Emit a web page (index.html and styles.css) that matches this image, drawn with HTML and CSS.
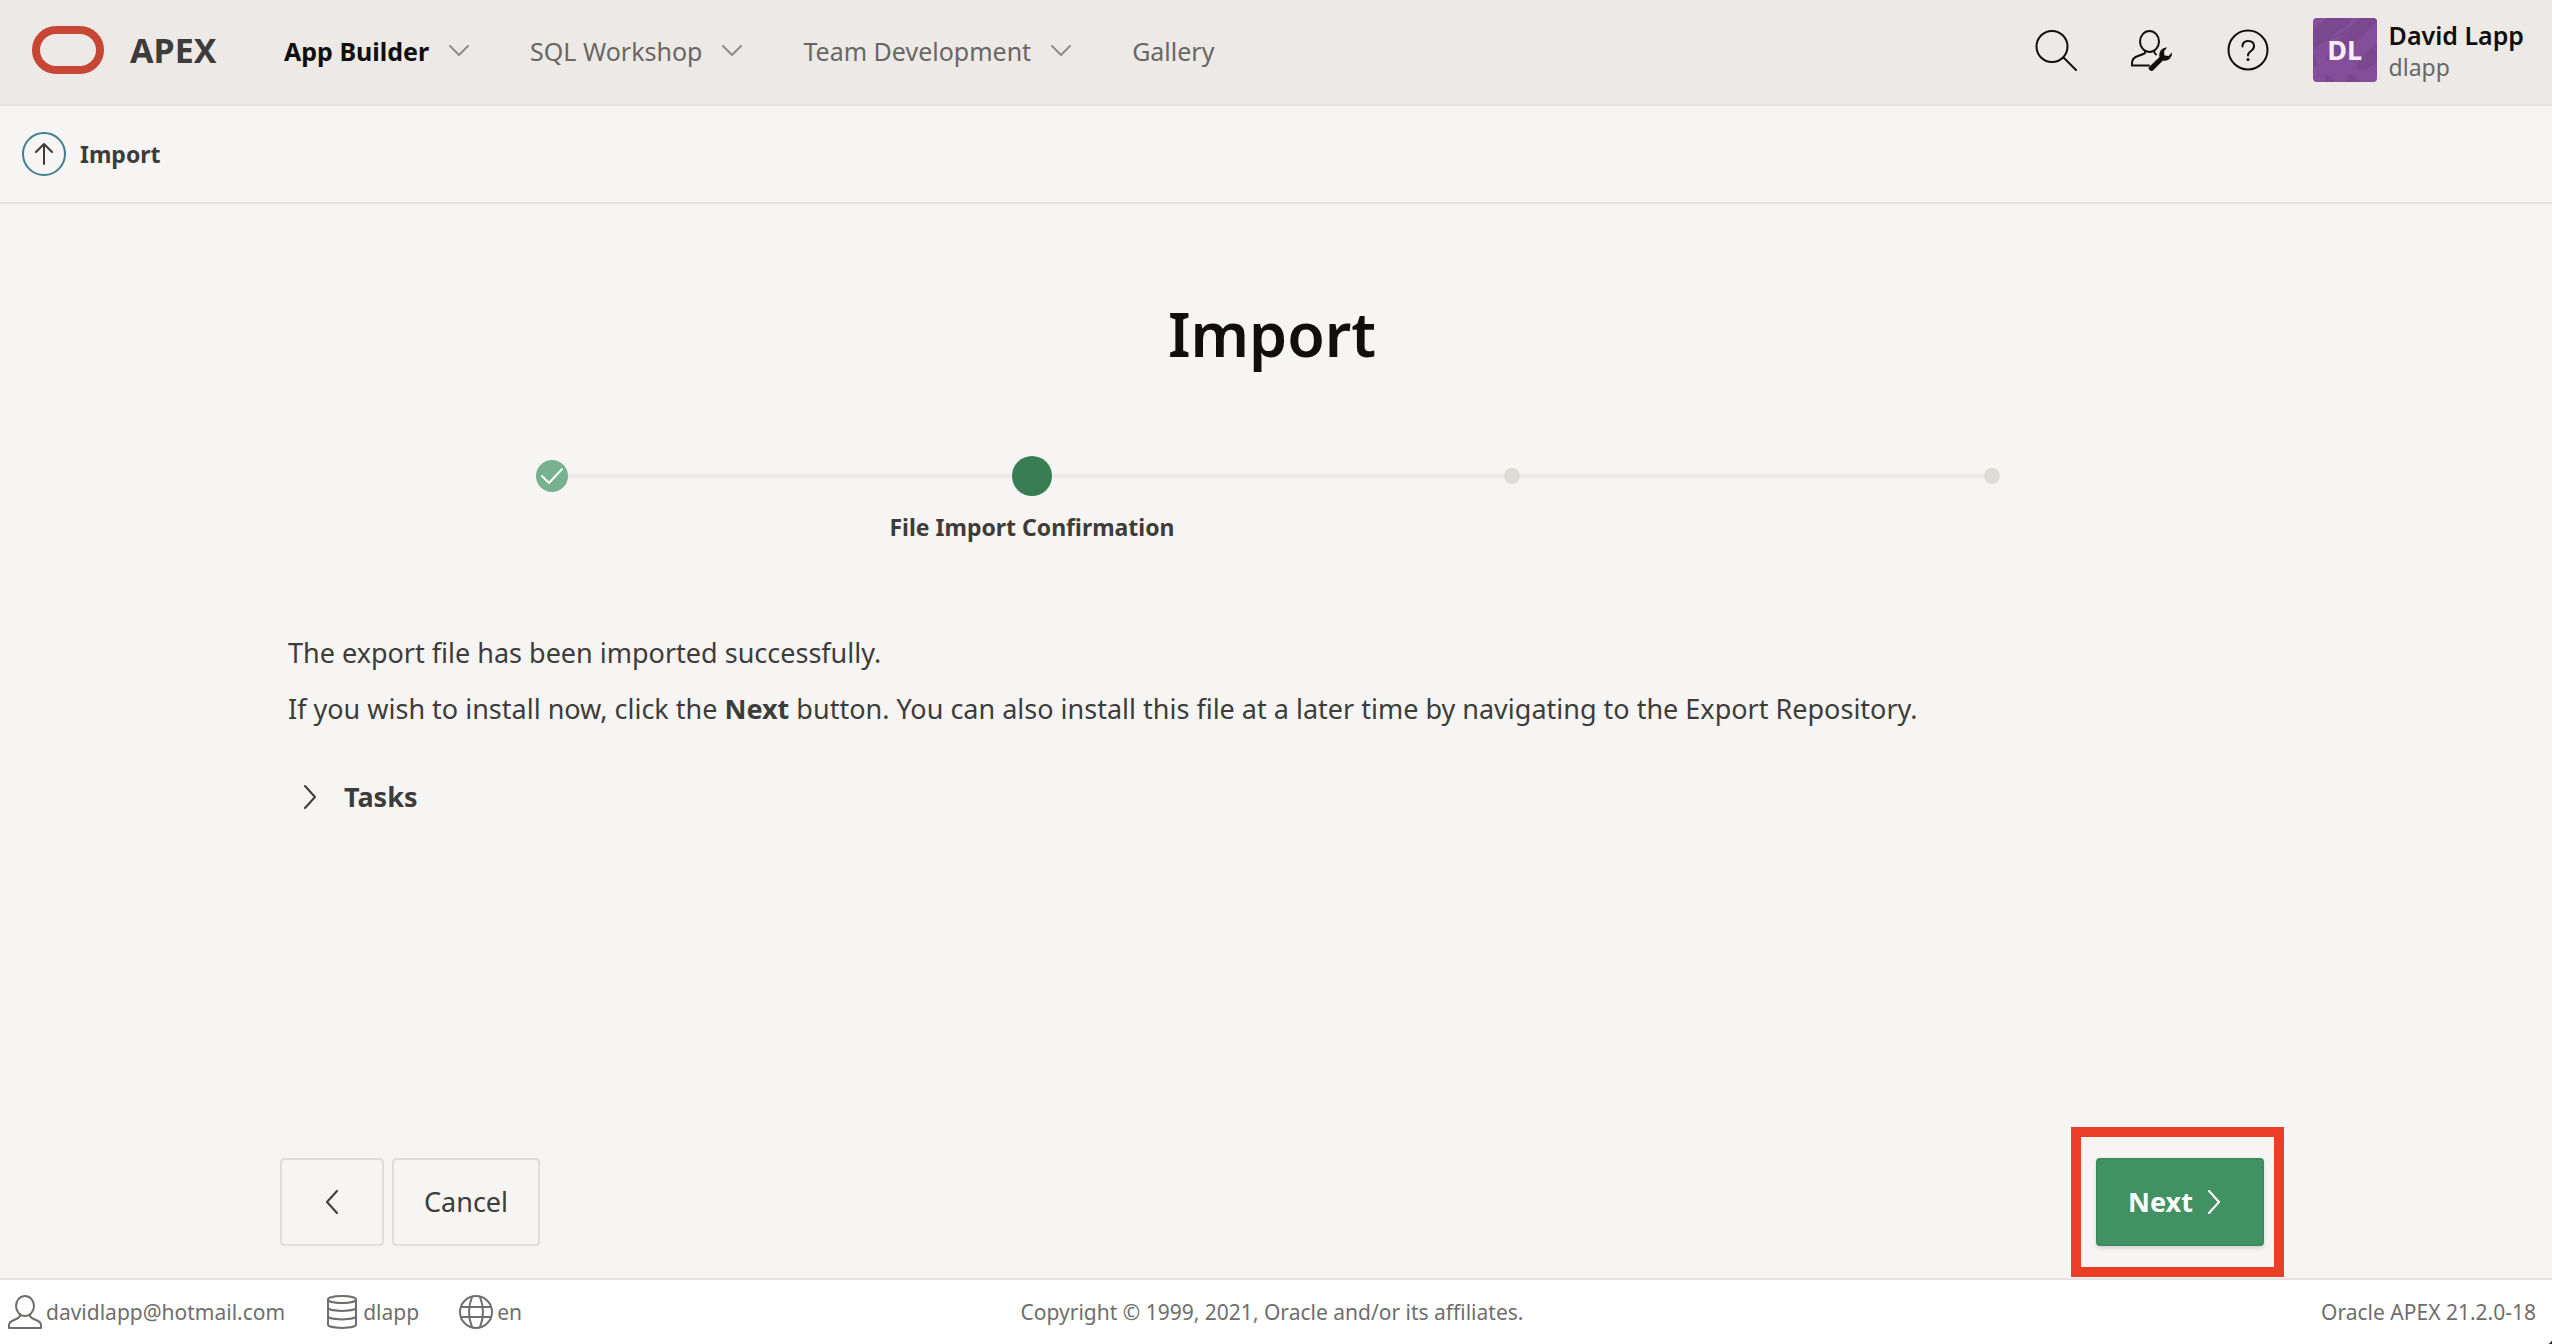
FILE: index.html
```html
<!DOCTYPE html>
<html lang="en">
<head>
<meta charset="utf-8">
<title>Import</title>
<link rel="stylesheet" href="styles.css">
</head>
<body>
<header class="header">
  <a class="brand" href="#">
    <svg class="logo" viewBox="0 0 72 48" aria-hidden="true"><rect x="4" y="4" width="64" height="40" rx="20"/></svg>
    <span class="brand-name">APEX</span>
  </a>
  <nav class="nav">
    <a class="nav-link current" href="#">App Builder<svg class="caret" viewBox="0 0 20 12" aria-hidden="true"><path d="M1 1l9 9 9-9"/></svg></a>
    <a class="nav-link" href="#">SQL Workshop<svg class="caret" viewBox="0 0 20 12" aria-hidden="true"><path d="M1 1l9 9 9-9"/></svg></a>
    <a class="nav-link" href="#">Team Development<svg class="caret" viewBox="0 0 20 12" aria-hidden="true"><path d="M1 1l9 9 9-9"/></svg></a>
    <a class="nav-link" href="#">Gallery</a>
  </nav>
  <div class="tools">
    <button class="tool" type="button" aria-label="Search"><svg viewBox="0 0 42 42"><circle cx="17" cy="17.500" r="15.500"/><path d="M28.500 28.500L41 41"/></svg></button>
    <button class="tool" type="button" aria-label="Administration"><svg viewBox="0 0 42 42"><ellipse cx="18.500" cy="12.500" rx="9.500" ry="10.500"/><path d="M14 22v2q-1 1-7 3-6 2-6 7v2.500h17M23 22q0 2 2 3.500"/><path class="solid" d="M18 38L28.500 28q-1-4 1.500-7 2.500-3 6-2.500L33 22.500l.5 4 4 .5 3.500-3.500q.5 4-2.500 6.500-3 2.500-6.500 1.500L22 41.500q-1.500 1-3.500-.5-1.500-1.500-.5-3z"/></svg></button>
    <button class="tool" type="button" aria-label="Help"><svg viewBox="0 0 42 42"><circle cx="21" cy="21" r="19.500"/><path d="M15.500 17.500q0-5.500 5.500-5.500 6 0 6 5 0 3-3 5t-3 4.500"/><circle class="solid" cx="21" cy="30.500" r="1.500"/></svg></button>
  </div>
  <a class="account" href="#">
    <span class="avatar">
      <svg class="avatar-art" viewBox="0 0 64 64" aria-hidden="true"><path d="M14 0h50v4Q48 18 36 32L20 42q-8 4-7-3Q22 24 34 16 18 18 0 32V12z"/><path d="M34 8Q24 12 18 20q10-4 17-9Q42 5 46 0h-6z" class="light"/><path d="M64 26Q54 32 47 42q-6 6-2 10 4 2 12-3l7-5zM12 64q-1-10 2-7 5 2 8 7zM32 64q3-11 8-7l8 7zM0 36q6 6 3 12H0z"/></svg>
      <span class="initials">DL</span>
    </span>
    <span class="who"><strong class="who-name">David Lapp</strong><span class="who-id">dlapp</span></span>
  </a>
</header>
<div class="crumbs">
  <button class="up" type="button" aria-label="Up"><svg viewBox="0 0 20 22"><path d="M10 21V2M2 9l8-8 8 8"/></svg></button>
  <h2 class="crumb">Import</h2>
</div>
<main class="main">
  <h1 class="title">Import</h1>
  <ol class="steps">
    <li class="step done"><span class="dot"><svg viewBox="0 0 24 18"><path d="M2 9l7 7L22 2"/></svg></span></li>
    <li class="step active"><span class="dot"></span><span class="step-label">File Import Confirmation</span></li>
    <li class="step"><span class="dot"></span></li>
    <li class="step"><span class="dot"></span></li>
  </ol>
  <div class="message">
    <p>The export file has been imported successfully.</p>
    <p>If you wish to install now, click the <b>Next</b> button. You can also install this file at a later time by navigating to the Export Repository.</p>
  </div>
  <button class="tasks" type="button" aria-expanded="false"><svg class="angle" viewBox="0 0 14 24"><path d="M2 1l10 11L2 23"/></svg>Tasks</button>
  <div class="actions">
    <button class="btn back" type="button" aria-label="Previous"><svg class="angle" viewBox="0 0 14 24"><path d="M12 1L2 12l10 11"/></svg></button>
    <button class="btn" type="button">Cancel</button>
    <div class="next-wrap"><button class="btn next" type="button">Next<svg class="angle" viewBox="0 0 14 24"><path d="M2 1l10 11L2 23"/></svg></button></div>
  </div>
</main>
<footer class="footer">
  <ul class="session">
    <li class="fact email"><svg viewBox="0 0 34 34"><ellipse cx="17" cy="11" rx="9" ry="10"/><path d="M12 19v2q-1 2-6 4-5 2-5 5v3h32v-3q0-3-5-5-5-2-6-4v-2"/></svg>davidlapp@hotmail.com</li>
    <li class="fact db"><svg viewBox="0 0 34 34"><ellipse cx="17" cy="4.500" rx="14" ry="3.500"/><path d="M3 4.500v25c0 4.500 28 4.500 28 0v-25M3 12.500c0 4.500 28 4.500 28 0M3 21c0 4.500 28 4.500 28 0"/></svg>dlapp</li>
    <li class="fact"><svg viewBox="0 0 34 34"><circle cx="17" cy="17" r="16"/><path d="M13 2q-6 15 0 30M21 2q6 15 0 30M3 12h28M3 22h28"/></svg>en</li>
  </ul>
  <span class="copyright">Copyright © 1999, 2021, Oracle and/or its affiliates.</span>
  <span class="version">Oracle APEX 21.2.0-18</span>
</footer>
</body>
</html>
```
FILE: styles.css
```css
* {
  box-sizing: border-box;
}

body {
  display: flex;
  flex-direction: column;
  min-height: 100vh;
  margin: 0;
  background: #f6f5f3;
  color: #3d3c3a;
  font: 27px/40px "Noto Sans", sans-serif;
}

a {
  color: inherit;
  text-decoration: none;
}

button {
  margin: 0;
  padding: 0;
  border: 0;
  background: none;
  color: inherit;
  font: inherit;
}

h1, h2, p, ol, ul {
  margin: 0;
  padding: 0;
  list-style: none;
}

svg {
  display: block;
  flex: none;
  fill: none;
  stroke: currentColor;
  stroke-width: 2;
  stroke-linecap: round;
  stroke-linejoin: round;
}

.solid {
  fill: currentColor;
  stroke: none;
}

.header {
  display: flex;
  align-items: center;
  height: 106px;
  padding: 0 28px 4px 32px;
  border-bottom: 2px solid #e6e2df;
  background: #ede9e6;
}

.brand {
  display: flex;
  align-items: center;
  gap: 26px;
  width: 252px;
}

.logo {
  width: 72px;
  height: 48px;
  color: #c74634;
  stroke-width: 8;
}

.brand-name {
  font-size: 34px;
  font-weight: 700;
}

.nav {
  display: flex;
  flex: 1;
  gap: 61px;
  padding-top: 2px;
}

.nav-link {
  display: flex;
  align-items: center;
  gap: 20px;
  color: #696764;
  font-size: 25px;
}

.nav-link.current {
  color: #100f0e;
  font-weight: 700;
}

.caret {
  width: 20px;
  height: 12px;
  color: #8f8c89;
}

.tools {
  display: flex;
  gap: 54px;
  margin-right: 44px;
  color: #100f0e;
}

.tool svg {
  width: 42px;
  height: 42px;
}

.account {
  display: flex;
  align-items: center;
  gap: 12px;
}

.avatar {
  display: grid;
  place-items: center;
  width: 64px;
  height: 64px;
  overflow: hidden;
  border-radius: 4px;
  background: #854e9b;
  color: #f6eef9;
  font-size: 27px;
  font-weight: 700;
}

.avatar > * {
  grid-area: 1 / 1;
}

.avatar-art {
  width: 64px;
  height: 64px;
  fill: #7b478e;
  stroke: none;
}

.light {
  fill: #854e9b;
}

.initials {
  z-index: 1;
}

.who {
  display: flex;
  flex-direction: column;
  padding-top: 2px;
  line-height: 32px;
}

.who-name {
  color: #100f0e;
  font-size: 25px;
  font-weight: 600;
}

.who-id {
  color: #696764;
  font-size: 23px;
}

.crumbs {
  display: flex;
  align-items: center;
  gap: 14px;
  height: 98px;
  padding-left: 22px;
  border-bottom: 2px solid #e6e4e1;
}

.up {
  display: grid;
  place-items: center;
  width: 44px;
  height: 44px;
  border: 2px solid #3f7e8e;
  border-radius: 50%;
}

.up svg {
  width: 20px;
  height: 22px;
}

.crumb {
  font-size: 23px;
  font-weight: 700;
}

.main {
  display: flex;
  flex: 1;
  flex-direction: column;
  padding: 86px 288px 32px 280px;
}

.title {
  color: #100f0e;
  font-size: 61px;
  font-weight: 600;
  line-height: 88px;
  text-align: center;
}

.steps {
  display: flex;
  align-self: center;
  width: 100%;
  max-width: 1920px;
  margin-top: 78px;
}

.step {
  display: grid;
  flex: 1;
  grid-template-rows: 40px 40px;
  row-gap: 11px;
  place-items: center;
  background: linear-gradient(#ebe9e7, #ebe9e7) no-repeat 0 18px / 100% 4px;
}

.step:first-child {
  background-position: 100% 18px;
  background-size: 50% 4px;
}

.step:last-child {
  background-size: 50% 4px;
}

.dot {
  display: grid;
  place-items: center;
  width: 16px;
  height: 16px;
  border-radius: 50%;
  background: #dedbd7;
}

.done .dot {
  width: 32px;
  height: 32px;
  background: #76b28f;
  color: #fff;
}

.dot svg {
  width: 24px;
  height: 18px;
}

.active .dot {
  width: 40px;
  height: 40px;
  background: #387d54;
}

.step-label {
  font-size: 23px;
  font-weight: 700;
}

.message {
  display: grid;
  gap: 16px;
  margin-top: 86px;
  padding: 0 8px;
}

.tasks {
  display: flex;
  align-items: center;
  align-self: flex-start;
  gap: 27px;
  margin: 48px 0 48px 23px;
  font-weight: 700;
}

.angle {
  width: 14px;
  height: 24px;
}

.actions {
  display: flex;
  gap: 8px;
  margin-top: auto;
}

.btn {
  display: flex;
  align-items: center;
  justify-content: center;
  gap: 14px;
  height: 88px;
  padding: 0 30px;
  border: 2px solid #dfdddb;
  border-radius: 4px;
}

.back {
  width: 104px;
}

.next-wrap {
  position: relative;
  margin-left: auto;
}

.next-wrap::after {
  position: absolute;
  inset: -31px -20px -31px -25px;
  border: 10px solid #ec3e26;
  content: "";
  pointer-events: none;
}

.next {
  justify-content: flex-start;
  width: 168px;
  border-color: #3d8a5b;
  background: #429162;
  box-shadow: 0 2px 4px rgba(0, 0, 0, 0.15);
  color: #fff;
  font-weight: 700;
}

.footer {
  display: grid;
  grid-template-columns: 1fr auto 1fr;
  align-items: center;
  height: 66px;
  padding: 0 16px 0 8px;
  border-top: 2px solid #e5e3e1;
  background: radial-gradient(circle at 0 0, transparent 10px, #222 11px) no-repeat 100% 100% / 9px 9px, #fff;
  color: #6f6e6c;
  font-size: 21px;
}

.session {
  display: flex;
  gap: 40px;
}

.fact {
  display: flex;
  align-items: center;
  gap: 4px;
}

.fact svg {
  width: 34px;
  height: 34px;
}

.version {
  justify-self: end;
}
```
